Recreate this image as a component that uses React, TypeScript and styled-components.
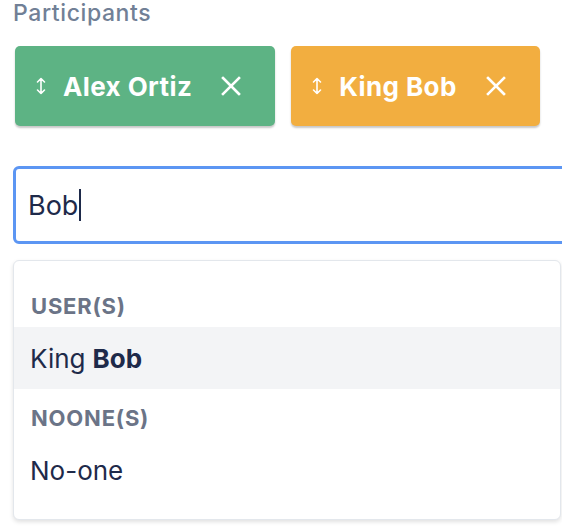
import React from "react";
import styled, { createGlobalStyle } from "styled-components";

const Global = createGlobalStyle`
  html, body { margin: 0; padding: 0; background: #ffffff; }
  body { font-family: Inter, "Noto Sans", sans-serif; overflow: hidden; }
`;

const Page = styled.div`
  width: 562px;
  height: 526px;
  overflow: hidden;
  padding-left: 13px;
  box-sizing: border-box;
`;

const Label = styled.div`
  font-size: 23px;
  font-weight: 500;
  color: #718096;
  line-height: 26px;
  margin-top: 0px;
  letter-spacing: 0.6px;
`;

const ChipRow = styled.div`
  display: flex;
  gap: 16px;
  margin-top: 20px;
  padding-left: 2px;
`;

const Chip = styled.div<{ $bg: string }>`
  display: flex;
  align-items: center;
  height: 80px;
  box-sizing: border-box;
  padding: 0 34px 0 21px;
  background: ${(p) => p.$bg};
  border-radius: 5px;
  box-shadow: 0 2px 2px rgba(0, 0, 0, 0.22);
  color: #ffffff;
`;

const ChipName = styled.span`
  font-size: 26px;
  font-weight: 700;
  margin-left: 17px;
  margin-right: 29px;
  letter-spacing: 0.4px;
`;

const InputBox = styled.div`
  margin-top: 40px;
  width: 580px;
  height: 78px;
  box-sizing: border-box;
  border: 3px solid #5c96f3;
  border-radius: 6px;
  display: flex;
  align-items: center;
  padding-left: 12px;
  font-size: 27px;
  color: #1e2a4a;
`;

const Caret = styled.span`
  display: inline-block;
  width: 2px;
  height: 32px;
  background: #1e2a4a;
  margin-left: 1px;
`;

const Menu = styled.div`
  margin-top: 16px;
  width: 548px;
  box-sizing: border-box;
  border: 1px solid #e3e7ec;
  border-radius: 6px;
  box-shadow: 0 2px 4px rgba(0, 0, 0, 0.12);
  padding: 16px 0 18px;
  background: #ffffff;
`;

const GroupHeader = styled.div`
  height: 50px;
  box-sizing: border-box;
  display: flex;
  align-items: flex-end;
  padding: 0 0 8px 17px;
  font-size: 22px;
  font-weight: 700;
  color: #6b7487;
  letter-spacing: 0.8px;
  line-height: 26px;
`;

const Option = styled.div<{ $active?: boolean }>`
  height: 62px;
  display: flex;
  align-items: center;
  padding-left: 16px;
  font-size: 26px;
  color: #1e2a4a;
  background: ${(p) => (p.$active ? "#f3f4f6" : "transparent")};
`;

const Strong = styled.strong`
  font-weight: 700;
  margin-left: 7px;
`;

const SortIcon = () => (
  <svg width="10" height="18" viewBox="0 0 10 18" fill="none" stroke="#fff" strokeWidth="1.6" strokeLinecap="round" strokeLinejoin="round">
    <path d="M5 1.5v15M1.5 5L5 1.5 8.5 5M1.5 13L5 16.5 8.5 13" />
  </svg>
);

const CloseIcon = () => (
  <svg width="20" height="20" viewBox="0 0 20 20" fill="none" stroke="#fff" strokeWidth="2.6" strokeLinecap="square">
    <path d="M2 2L18 18M18 2L2 18" />
  </svg>
);

const participants = [
  { name: "Alex Ortiz", color: "#5db384" },
  { name: "King Bob", color: "#f2ae40" },
];

export default function App() {
  return (
    <>
      <Global />
      <Page>
        <Label>Participants</Label>
        <ChipRow>
          {participants.map((p) => (
            <Chip key={p.name} $bg={p.color}>
              <SortIcon />
              <ChipName>{p.name}</ChipName>
              <CloseIcon />
            </Chip>
          ))}
        </ChipRow>
        <InputBox>
          <span>Bob</span>
          <Caret />
        </InputBox>
        <Menu>
          <GroupHeader>USER(S)</GroupHeader>
          <Option $active>
            King<Strong>Bob</Strong>
          </Option>
          <GroupHeader>NOONE(S)</GroupHeader>
          <Option>No-one</Option>
        </Menu>
      </Page>
    </>
  );
}
